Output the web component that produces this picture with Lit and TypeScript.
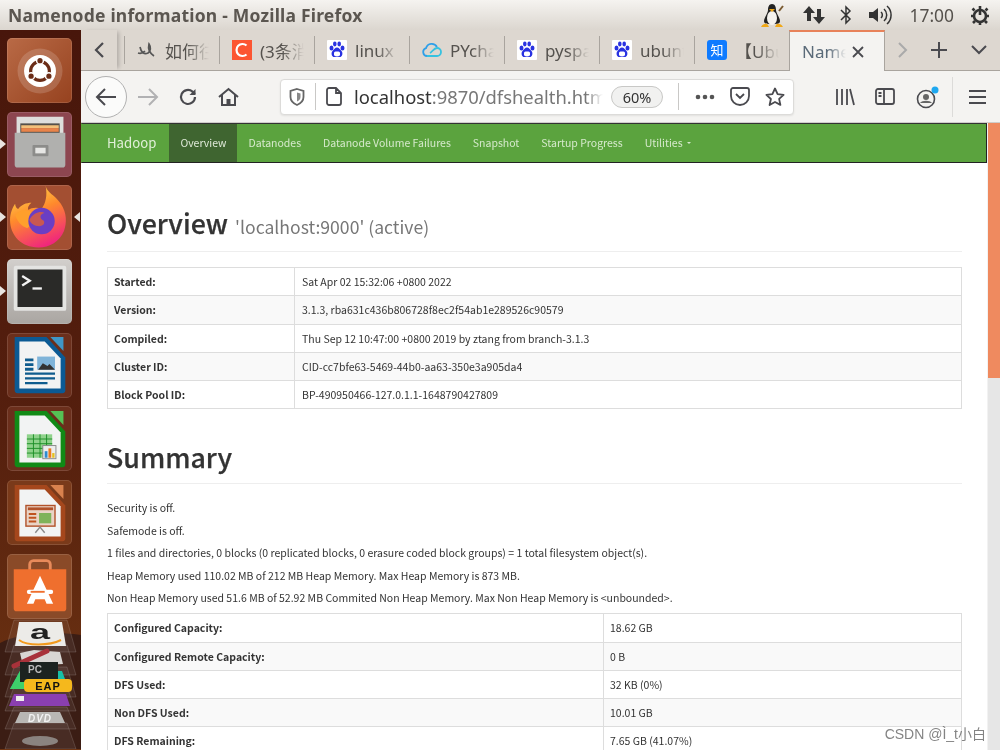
import { LitElement, html, css } from "lit";
import { customElement } from "lit/decorators.js";

const baidu = html`<svg class="fav" viewBox="0 0 20 20"><rect width="20" height="20" rx="1" fill="#fff"/><g fill="#2932e1"><ellipse cx="4.500" cy="8" rx="2" ry="2.600"/><ellipse cx="7.800" cy="4" rx="1.800" ry="2.400"/><ellipse cx="12.200" cy="4" rx="1.800" ry="2.400"/><ellipse cx="15.500" cy="8" rx="2" ry="2.600"/><path d="M10 7.500c2 0 3 2 4.500 3.400 1.500 1.400 1.400 6.100-2 6.100-1 0-1.600-.4-2.500-.4s-1.600.4-2.500.4c-3.400 0-3.500-4.700-2-6.100C7 9.500 8 7.500 10 7.500z"/></g><rect x="7" y="11.500" width="6" height="4.500" rx="1.500" fill="#fff"/></svg>`;

const tabs = [
  { icon: html`<svg class="fav" viewBox="0 0 20 20" fill="none" stroke="#555" stroke-width="1.700"><path d="M3 7c1 5 4 8 8 6 3-2 3-6 1-9-1 4-1 8 5 12"/><path d="M1 13c3 1 5 0 7-2"/></svg>`, t: "如何往" },
  { icon: html`<svg class="fav" viewBox="0 0 20 20"><rect width="20" height="20" fill="#fc5531"/><path d="M14.500 5.500A6 6 0 1 0 14.500 14.500" fill="none" stroke="#fff" stroke-width="2.200"/></svg>`, t: "(3条消息)" },
  { icon: baidu, t: "linux" },
  { icon: html`<svg class="fav" viewBox="0 0 20 20" fill="none" stroke-width="1.800"><path d="M5 16a4 4 0 0 1-1-7.800A6 6 0 0 1 15 7" stroke="#2f9fe8"/><path d="M5 16h10a4 4 0 0 0 0-8c-3 0-5 4-7 5" stroke="#35c2e0"/></svg>`, t: "PYcharm" },
  { icon: baidu, t: "pyspark" },
  { icon: baidu, t: "ubuntu" },
  { icon: html`<svg class="fav" viewBox="0 0 20 20"><rect width="20" height="20" rx="3" fill="#0f7bff"/><text x="10" y="15" text-anchor="middle" font-size="13" font-family="Noto Sans CJK SC" fill="#fff">知</text></svg>`, t: "【Ubuntu" },
];

const navItems = ["Overview", "Datanodes", "Datanode Volume Failures", "Snapshot", "Startup Progress"];

const overview: [string, string][] = [
  ["Started:", "Sat Apr 02 15:32:06 +0800 2022"],
  ["Version:", "3.1.3, rba631c436b806728f8ec2f54ab1e289526c90579"],
  ["Compiled:", "Thu Sep 12 10:47:00 +0800 2019 by ztang from branch-3.1.3"],
  ["Cluster ID:", "CID-cc7bfe63-5469-44b0-aa63-350e3a905da4"],
  ["Block Pool ID:", "BP-490950466-127.0.1.1-1648790427809"],
];
const summary: [string, string][] = [
  ["Configured Capacity:", "18.62 GB"],
  ["Configured Remote Capacity:", "0 B"],
  ["DFS Used:", "32 KB (0%)"],
  ["Non DFS Used:", "10.01 GB"],
  ["DFS Remaining:", "7.65 GB (41.07%)"],
];
const lines = [
  "Security is off.",
  "Safemode is off.",
  "1 files and directories, 0 blocks (0 replicated blocks, 0 erasure coded block groups) = 1 total filesystem object(s).",
  "Heap Memory used 110.02 MB of 212 MB Heap Memory. Max Heap Memory is 873 MB.",
  "Non Heap Memory used 51.6 MB of 52.92 MB Commited Non Heap Memory. Max Non Heap Memory is <unbounded>.",
];

const launcher = [
  { cls: "dash", svg: html`<svg viewBox="0 0 64 64"><circle cx="32" cy="32" r="24" fill="#fff" opacity=".16"/><circle cx="32" cy="32" r="17" fill="#fff"/><circle cx="32" cy="32" r="10" fill="none" stroke="#6b2c16" stroke-width="3.400"/><g fill="#6b2c16" stroke="#fff" stroke-width="1.600"><circle cx="32" cy="21" r="3.600"/><circle cx="22.500" cy="37.500" r="3.600"/><circle cx="41.500" cy="37.500" r="3.600"/></g></svg>` },
  { cls: "files", pip: true, svg: html`<svg viewBox="0 0 64 64"><path d="M7 3h50v18H7z" fill="#dededc"/><rect x="11" y="10" width="42" height="11" fill="#55504a"/><rect x="12" y="12" width="40" height="3" fill="#f3c07a"/><rect x="12" y="15" width="40" height="4" fill="#e8834a"/><path d="M5 20h54v34a3 3 0 0 1-3 3H8a3 3 0 0 1-3-3z" fill="#b0b0ae"/><rect x="24" y="33" width="17" height="12" rx="1" fill="#8c8c8a"/><rect x="27" y="36" width="11" height="6" fill="#e6e6e4"/></svg>` },
  { cls: "fox", pip: true, pipR: true, svg: html`<svg viewBox="0 0 64 64" class="big"><defs><linearGradient id="fx" x1="0.200" y1="0" x2="0.600" y2="1"><stop offset="0" stop-color="#ffe14d"/><stop offset="0.450" stop-color="#ff8a2c"/><stop offset="1" stop-color="#f0247e"/></linearGradient></defs><path d="M38 1c1 7 9 9 15 18 6 9 6 19 3 27-4 10-14 16-25 16C14 62 3 50 3 35c0-7 3-13 5-16 0 3 2 5 3 5 3-4 8-6 13-6-3 3-4 5-3 7 3-2 8-3 13-1 4-5 6-13 4-23z" fill="url(#fx)"/><path d="M8 30c5-6 12-6 17-2-3 3-1 7 3 8l-8 7c-6-2-10-7-12-13z" fill="#ff9f2c"/><circle cx="34" cy="36" r="13" fill="#6a3ec4"/><path d="M22 35c4-8 12-9 15-7-5 1-5 5-2 7 3 1 2 6-3 6-5 0-8-2-10-6z" fill="#e9622c" opacity=".75"/></svg>` },
  { cls: "term", pip: true, svg: html`<svg viewBox="0 0 64 64"><rect x="4" y="4" width="56" height="48" rx="2" fill="#e4e4e2"/><rect x="8" y="8" width="48" height="40" fill="#2a2a28"/><path d="M13 15l8 5-8 5" fill="none" stroke="#f2f2f2" stroke-width="2.500"/><rect x="24" y="27" width="10" height="2.500" fill="#f2f2f2"/></svg>` },
  { cls: "doc", svg: html`<svg viewBox="0 0 64 64"><path d="M5 2h34l20 22v35a3 3 0 0 1-3 3H8a3 3 0 0 1-3-3z" fill="#0b5a94"/><path d="M10 7h27l17 18v32H10z" fill="#f2f3f3"/><path d="M43 2h14v15z" fill="#3f97c7"/><path d="M16 25h9v3h-9zm0 5h9v3h-9zm0 5h9v3h-9zM16 40h32v2.500H16zm0 5h32v2.500H16zm0 5h24v2.500H16z" fill="#0f5c8e"/><rect x="29" y="23" width="19" height="14" fill="#7fb4d9"/><path d="M30 37l5-7 5 3 2-2 6 6z" fill="#333"/></svg>` },
  { cls: "calc", svg: html`<svg viewBox="0 0 64 64"><path d="M5 2h34l20 22v35a3 3 0 0 1-3 3H8a3 3 0 0 1-3-3z" fill="#118a16"/><path d="M10 7h27l17 18v32H10z" fill="#f2f3f3"/><path d="M43 2h14v15z" fill="#55c255"/><rect x="18" y="27" width="27" height="25" fill="#8fd28b"/><path d="M18 32h27M18 37h27M18 42h27M18 47h27M25 27v25M32 27v25M39 27v25" stroke="#1c8e26" stroke-width="1"/><rect x="35" y="39" width="14" height="14" fill="#eee" stroke="#888"/><rect x="37" y="45" width="3" height="7" fill="#2f8bd1"/><rect x="41" y="42" width="3" height="10" fill="#ea7a22"/><rect x="45" y="47" width="2.500" height="5" fill="#e6c11e"/></svg>` },
  { cls: "press", svg: html`<svg viewBox="0 0 64 64"><path d="M5 2h34l20 22v35a3 3 0 0 1-3 3H8a3 3 0 0 1-3-3z" fill="#a5471c"/><path d="M10 7h27l17 18v32H10z" fill="#f2f3f3"/><path d="M43 2h14v15z" fill="#d9824e"/><rect x="17" y="24" width="31" height="22" fill="#e9d4c6" stroke="#b2522a" stroke-width="1.500"/><rect x="19" y="26" width="27" height="3" fill="#b2522a"/><path d="M20 32h8v2h-8zm0 4h8v2h-8zm0 4h8v2h-8z" fill="#c0531f"/><rect x="31" y="32" width="13" height="11" fill="#7fb35a"/><path d="M27 53l5-6 5 6" fill="none" stroke="#888" stroke-width="1.500"/></svg>` },
  { cls: "store", svg: html`<svg viewBox="0 0 64 64"><path d="M21 18V9a4 4 0 0 1 4-4h14a4 4 0 0 1 4 4v9" fill="none" stroke="#e88a5a" stroke-width="3"/><path d="M4 14h56v42a3 3 0 0 1-3 3H7a3 3 0 0 1-3-3z" fill="#ef6f2e"/><path d="M32 21l-14 30h7l2-5h10l2 5h7z" fill="#fff"/><rect x="18" y="36" width="28" height="4.500" rx="2" fill="#fff"/><rect x="22" y="37.200" width="15" height="2" fill="#ef6f2e"/></svg>` },
];

const tray = (y: number, h: number) =>
  `M14 ${y}H67L76 ${y + h}H5Z`;

@customElement("app-root")
export class AppRoot extends LitElement {
  static styles = css`
    :host { display: block; width: 1000px; height: 750px; overflow: hidden; font-family: "Noto Sans", sans-serif; background: #fff; position: relative; filter: blur(0.35px); }
    svg { display: block; }
    .titlebar { height: 30px; display: flex; align-items: center; padding: 0 10px 0 8px; background: linear-gradient(#f5f3f0, #dbd6cf); color: #5b5650; }
    .title { font: 700 17.500px/30px "Noto Sans", sans-serif; flex: 1; letter-spacing: 0.200px; white-space: nowrap; }
    .tray { display: flex; align-items: center; }
    .tray svg { flex: none; }
    .clock { font: 400 17.400px "Noto Sans", sans-serif; color: #55514c; margin: 0 16px 0 0; }
    .main { display: flex; height: 720px; }
    .launcher { width: 81px; flex: none; box-sizing: border-box; background: linear-gradient(#48160b 0, #551f0e 55%, #6f3512 100%); padding: 8px 0 0 7px; display: flex; flex-direction: column; gap: 8.700px; overflow: hidden; }
    .tile { width: 65px; height: 65px; border-radius: 5px; position: relative; display: flex; align-items: center; justify-content: center; flex: none; box-shadow: inset 0 0 0 1px rgba(255,255,255,.12); }
    .tile svg { width: 60px; height: 60px; }
    .tile svg.big { width: 66px; height: 66px; margin-top: -2px; }
    .tile.dash { background: linear-gradient(135deg, #b96a46, #96421f); }
    .tile.files { background: #8d4650; }
    .tile.fox { background: #a34f32; }
    .tile.term { background: linear-gradient(#d2cfcc, #aaa6a2); }
    .tile.doc, .tile.calc { background: #6b2f1c; }
    .tile.press { background: #7a3a1a; }
    .tile.store { background: #8a4a28; }
    .pip { position: absolute; left: -7px; top: 27px; width: 0; height: 0; border: 5px solid transparent; border-left: 6px solid #e8e4e0; border-right: 0; }
    .pip.r { left: auto; right: -8px; border-right: 6px solid #e8e4e0; border-left: 0; }
    .stack { flex: none; margin: -8.700px 0 0 -7px; width: 81px; height: 130px; }
    .browser { flex: 1; min-width: 0; display: flex; flex-direction: column; }
    .tabbar { height: 41px; flex: none; display: flex; background: #ddd7d0; box-sizing: border-box; border-bottom: 1px solid #a9a49e; }
    .scrollbtn { width: 36px; flex: none; display: flex; align-items: center; justify-content: center; box-shadow: 4px 0 4px -2px rgba(0,0,0,.2); }
    .tab { width: 94px; flex: none; display: flex; align-items: center; box-sizing: border-box; padding-left: 12px; gap: 8px; overflow: hidden; white-space: nowrap; font: 400 17px "Noto Sans", "Noto Sans CJK SC", sans-serif; color: #55524e; }
    .tabsep { width: 1px; margin: 6px 0; background: #a9a49e; flex: none; }
    .tab .label { -webkit-mask-image: linear-gradient(90deg, #000 50%, transparent); mask-image: linear-gradient(90deg, #000 50%, transparent); width: 44px; overflow: hidden; flex: none; }
    .fav { width: 20px; height: 20px; flex: none; }
    .active { width: 96px; flex: none; margin-bottom: -1px; background: #f4f3f1; border-top: 2px solid #e8825a; border-left: 1px solid #a9a49e; border-right: 1px solid #a9a49e; box-sizing: border-box; display: flex; align-items: center; padding-left: 12px; font: 400 17px "Noto Sans", sans-serif; color: #5a6a78; gap: 5px; }
    .active .label { width: 44px; overflow: hidden; -webkit-mask-image: linear-gradient(90deg, #000 60%, transparent); mask-image: linear-gradient(90deg, #000 60%, transparent); }
    .tabtools { flex: 1; display: flex; align-items: center; }
    .toolbar { height: 52px; flex: none; box-sizing: border-box; background: #f4f3f1; border-bottom: 1px solid #cfcdca; display: flex; align-items: center; padding-left: 4px; }
    .back { width: 42px; height: 42px; border-radius: 50%; background: #fbfbfa; border: 1px solid #b1b1b1; box-sizing: border-box; display: flex; align-items: center; justify-content: center; flex: none; }
    .tbtn { display: flex; justify-content: center; flex: none; }
    .urlbar { margin-left: 31px; width: 514px; height: 36px; flex: none; box-sizing: border-box; background: #fff; border: 1px solid #dcdbd9; border-radius: 4px; display: flex; align-items: center; box-shadow: 0 1px 2px rgba(0,0,0,.08); }
    .vsep { width: 1px; height: 27px; background: #c9c8c6; flex: none; }
    .url { font: 400 18.400px "Noto Sans", sans-serif; color: #777; width: 249px; overflow: hidden; white-space: nowrap; flex: none; margin-left: 12px; -webkit-mask-image: linear-gradient(90deg, #000 93%, transparent); mask-image: linear-gradient(90deg, #000 93%, transparent); }
    .url b { font-weight: 400; color: #333; }
    .zoom { width: 52px; height: 22px; box-sizing: border-box; border: 1px solid #c8c8c6; border-radius: 11px; background: #f1f1f0; font: 400 14.500px/20px "Noto Sans", sans-serif; color: #333; text-align: center; flex: none; margin-left: 8px; }
    .viewport { flex: 1; min-height: 0; display: flex; overflow: hidden; }
    .page { width: 906px; flex: none; box-sizing: border-box; overflow: hidden; }
    .navbar { height: 40px; box-sizing: border-box; background: #5ba33e; border-top: 1px solid #333; border-bottom: 1px solid #222; border-right: 1px solid #222; border-left: 1px solid #5ba33e; display: flex; align-items: stretch; font: 400 10.500px/38px "Noto Sans CJK SC", sans-serif; color: #d6e9cc; }
    .brand { font-size: 13.200px; padding: 0 13px 0 25px; color: #e2f0da; }
    .navitem { padding: 0 11px; white-space: nowrap; display: flex; align-items: center; gap: 4px; }
    .navitem.on { background: #3f6530; color: #dfe9d8; }
    .caret { width: 0; height: 0; border: 2px solid transparent; border-top: 2px solid #d6e9cc; border-bottom: 0; }
    .content { padding: 0 25px 0 26px; color: #333; font-family: "Noto Sans CJK SC", sans-serif; }
    h1 { margin: 0; font: 500 26.800px/32px "Noto Sans CJK SC", sans-serif; color: #333; -webkit-text-stroke: 0.25px #333; border-bottom: 1px solid #eee; padding: 44px 0 12px; }
    h1 small { font-size: 17.600px; line-height: 1; font-weight: 400; color: #777; margin-left: 1px; -webkit-text-stroke: 0; }
    h1.second { padding: 0 0 10px; margin-top: 32px; }
    table { width: 100%; border-collapse: collapse; table-layout: fixed; font: 400 10.500px/14px "Noto Sans CJK SC", sans-serif; margin-top: 15px; border: 1px solid #ddd; }
    td, th { border: 1px solid #ddd; padding: 7px 6px 6.250px; text-align: left; height: 14px; color: #333; }
    .first td { padding-left: 7px; }
    th { font-weight: 700; }
    tr:nth-child(odd) { background: #f9f9f9; }
    .lines { margin-top: 17px; font: 400 10.500px/14px "Noto Sans CJK SC", sans-serif; color: #333; display: flex; flex-direction: column; gap: 8.500px; }
    .lines + table { margin-top: 8px; }
    .scroll { width: 13px; flex: none; background: #e6e6e6; position: relative; border-left: 1px solid #f2f2f2; box-sizing: border-box; }
    .thumb { position: absolute; left: 0; right: 0; top: 0; height: 255px; background: #ef8a5f; }
    .wm { position: absolute; right: 14px; top: 725px; font: 400 14px/18px "Liberation Sans", "Noto Sans CJK SC", sans-serif; color: rgba(90,90,90,.75); }
  `;

  private kv(rows: [string, string][], w: string, cls = "") {
    return html`<table class=${cls}><colgroup><col style="width:${w}"/><col/></colgroup>${rows.map(([k, v]) => html`<tr><th>${k}</th><td>${v}</td></tr>`)}</table>`;
  }

  render() {
    return html`
      <div class="titlebar">
        <div class="title">Namenode information - Mozilla Firefox</div>
        <div class="tray">
          <svg width="26" height="26" viewBox="0 0 26 26" style="margin-right:17px"><path d="M13 2c3 0 4 3 4 6s4 8 4 11-3 3-8 3-8 0-8-3 4-8 4-11 1-6 4-6z" fill="#222"/><ellipse cx="13" cy="16" rx="5" ry="7" fill="#f4f2ee"/><path d="M10 7h6l-3 3z" fill="#f0a818"/><path d="M2 25c2-4 6-4 7-2l1 2zM24 25c-2-4-6-4-7-2l-1 2z" fill="#f0a818"/><path d="M20 9l4-5" stroke="#7a5a30" stroke-width="2"/></svg>
          <svg width="24" height="22" viewBox="0 0 24 22" style="margin-right:14px" fill="#333"><path d="M7 2l6 7H9v8H5V9H1zM17 20l6-7h-4V5h-4v8h-4z"/></svg>
          <svg width="12" height="20" viewBox="0 0 12 20" style="margin-right:16px" fill="none" stroke="#333" stroke-width="1.500"><path d="M1 5l9 9-4 4V2l4 4-9 9"/></svg>
          <svg width="25" height="20" viewBox="0 0 25 20" style="margin-right:17px" fill="none" stroke="#333" stroke-width="1.500"><path d="M1 7h4l5-4v14l-5-4H1z" fill="#333" stroke="none"/><path d="M13 7a4 4 0 0 1 0 6M16 4a8 8 0 0 1 0 12M19 1a12 12 0 0 1 0 18"/></svg>
          <div class="clock">17:00</div>
          <svg width="20" height="20" viewBox="0 0 20 20" fill="none" stroke="#333" stroke-width="2.600"><circle cx="10" cy="11" r="6"/><path d="M10 1v9M2.500 3.500l2 2M17.500 3.500l-2 2M1 11h2M17 11h2M3 18l2-2M17 18l-2-2M10 17v3"/></svg>
        </div>
      </div>
      <div class="main">
        <div class="launcher">
          ${launcher.map((l: any) => html`<div class="tile ${l.cls}">${l.pip ? html`<i class="pip"></i>` : ""}${l.pipR ? html`<i class="pip r"></i>` : ""}${l.svg}</div>`)}
          <svg class="stack" viewBox="0 0 81 130">
            <path d="M0 24c20-10 50-12 81-8v114H0z" fill="#3b1d14"/>
            <g fill="rgba(255,255,255,.07)" stroke="rgba(255,255,255,.14)">
              <path d="${tray(1, 32)}"/><path d="${tray(26, 30)}"/><path d="${tray(48, 30)}"/><path d="${tray(68, 24)}"/><path d="${tray(88, 22)}"/><path d="${tray(104, 26)}"/>
            </g>
            <path d="M19 3h43l4 24H15z" fill="#ecebe8"/>
            <text transform="translate(40 20) scale(1.500 .85)" text-anchor="middle" font-family="Liberation Sans" font-weight="700" font-size="24" fill="#222">a</text>
            <path d="M19 21c8 6 30 6 42 0" fill="none" stroke="#f29a1e" stroke-width="2"/>
            <path d="M20 34l14-3 26 2 3 12-40 2z" fill="#d8d6d3"/>
            <path d="M14 47l33-15" stroke="#a8323a" stroke-width="5" stroke-linecap="round"/>
            <path d="M10 70l10-18 42 0 6 16z" fill="#17c0a8"/>
            <path d="M10 70l10-18h8v18z" fill="#3ed06a"/>
            <rect x="20" y="43" width="38" height="20" fill="#1c2320"/>
            <text x="28" y="54" font-family="Liberation Sans" font-weight="700" font-size="10" fill="#bbb">PC</text>
            <path d="M9 87l5-12h52l4 12z" fill="#8a3fb0"/>
            <rect x="16" y="77" width="8" height="5" fill="#eee"/>
            <rect x="24" y="60" width="48" height="13" rx="4" fill="#f5b81c"/>
            <text x="48" y="70.500" text-anchor="middle" font-family="Liberation Sans" font-weight="700" font-size="11" letter-spacing="1" fill="#111">EAP</text>
            <path d="M20 93h40l5 11H15z" fill="#b9b7b4"/>
            <text x="40" y="103" text-anchor="middle" font-family="Liberation Sans" font-weight="700" font-style="italic" font-size="10" letter-spacing="1" fill="#f2f2f2">DVD</text>
            <ellipse cx="40" cy="122" rx="18" ry="5" fill="#8a837f"/>
          </svg>
        </div>
        <div class="browser">
          <div class="tabbar">
            <div class="scrollbtn"><svg width="12" height="18" viewBox="0 0 12 18" fill="none" stroke="#4a4a4f" stroke-width="2.200"><path d="M10 2L3 9l7 7"/></svg></div>
            <div class="tabsep" style="margin-left:7px"></div>
            ${tabs.map((t, i) => html`<div class="tab"><span>${t.icon}</span><span class="label">${t.t}</span></div>${i < tabs.length - 1 ? html`<div class="tabsep"></div>` : ""}`)}
            <div class="active"><span class="label">Name</span><svg width="14" height="14" viewBox="0 0 14 14" stroke="#4a4a4f" stroke-width="1.800"><path d="M2 2l10 10M12 2L2 12"/></svg></div>
            <div class="tabtools">
              <svg width="12" height="18" viewBox="0 0 12 18" fill="none" stroke="#aaa" stroke-width="2" style="margin-left:12px"><path d="M2 2l7 7-7 7"/></svg>
              <svg width="18" height="18" viewBox="0 0 18 18" stroke="#4a4a4f" stroke-width="2" style="margin-left:21px"><path d="M9 1v16M1 9h16"/></svg>
              <svg width="16" height="10" viewBox="0 0 16 10" fill="none" stroke="#4a4a4f" stroke-width="2" style="margin-left:23px"><path d="M1 1l7 7 7-7"/></svg>
            </div>
          </div>
          <div class="toolbar">
            <div class="back"><svg width="22" height="20" viewBox="0 0 22 20" fill="none" stroke="#4a4a4f" stroke-width="2"><path d="M10 2L2 10l8 8M2 10h19"/></svg></div>
            <div class="tbtn" style="width:42px"><svg width="22" height="20" viewBox="0 0 22 20" fill="none" stroke="#b1b1b3" stroke-width="2"><path d="M12 2l8 8-8 8M20 10H1"/></svg></div>
            <div class="tbtn" style="width:38px"><svg width="20" height="20" viewBox="0 0 20 20" fill="none" stroke="#4a4a4f" stroke-width="2.200"><path d="M17 10a7 7 0 1 1-2.500-5.400L17 7"/><path d="M17.500 2v6h-6" fill="#4a4a4f" stroke="none"/></svg></div>
            <div class="tbtn" style="width:42px"><svg width="21" height="20" viewBox="0 0 21 20" fill="none" stroke="#4a4a4f" stroke-width="2"><path d="M1 10l9.500-8 9.500 8M4 8v10h13V8"/><rect x="8.500" y="12" width="4" height="6" fill="#4a4a4f" stroke="none"/></svg></div>
            <div class="urlbar">
              <svg width="16" height="18" viewBox="0 0 16 18" style="margin:0 10px 0 8px" fill="none" stroke="#666" stroke-width="1.800"><path d="M8 1l6.500 2v6c0 4-3 6.500-6.500 8C4.500 15.500 1.500 13 1.500 9V3z"/><path d="M8 4.500l3.500 1v3.500c0 2-1.500 3.500-3.500 4.500z" fill="#888" stroke="none"/></svg>
              <div class="vsep"></div>
              <svg width="16" height="19" viewBox="0 0 16 19" style="margin-left:10px" fill="none" stroke="#4a4a4f" stroke-width="1.800"><path d="M3 1h7l5 5v10a2 2 0 0 1-2 2H3a2 2 0 0 1-2-2V3a2 2 0 0 1 2-2zM10 1v5h5"/></svg>
              <div class="url"><b>localhost</b>:9870/dfshealth.html</div>
              <div class="zoom">60%</div>
              <div class="vsep" style="margin-left:15px"></div>
              <svg width="20" height="6" viewBox="0 0 20 6" fill="#555" style="margin-left:16px"><circle cx="3" cy="3" r="2.300"/><circle cx="10" cy="3" r="2.300"/><circle cx="17" cy="3" r="2.300"/></svg>
              <svg width="20" height="19" viewBox="0 0 20 19" fill="none" stroke="#4a4a4f" stroke-width="1.800" style="margin-left:15px"><path d="M3 1h14a2 2 0 0 1 2 2v6a9 9 0 0 1-18 0V3a2 2 0 0 1 2-2zM6 7l4 4 4-4"/></svg>
              <svg width="20" height="20" viewBox="0 0 20 20" fill="none" stroke="#4a4a4f" stroke-width="1.800" style="margin-left:15px"><path d="M10 1.500l2.600 5.600 6 .7-4.500 4.100 1.300 6L10 15l-5.400 3 1.300-6L1.400 7.800l6-.7z" stroke-linejoin="round"/></svg>
            </div>
            <svg width="20" height="18" viewBox="0 0 20 18" fill="none" stroke="#4a4a4f" stroke-width="1.800" style="margin-left:41px"><path d="M2 1v16M7 1v16M12 1v16M15 1l4 16"/></svg>
            <svg width="20" height="17" viewBox="0 0 20 17" fill="none" stroke="#4a4a4f" stroke-width="1.800" style="margin-left:20px"><rect x="1" y="1" width="18" height="15" rx="2"/><path d="M9 1v15M3.500 5h3M3.500 8h3"/></svg>
            <svg width="24" height="24" viewBox="0 0 24 24" style="margin-left:21px" fill="none" stroke="#4a4a4f" stroke-width="1.600"><circle cx="10" cy="14" r="8.500"/><circle cx="10" cy="12" r="3" fill="#666" stroke="none"/><path d="M4 18c2-3 10-3 12 0" fill="#666" stroke="none"/><circle cx="19" cy="5" r="3.500" fill="#1fa8f0" stroke="none"/></svg>
            <div class="vsep" style="height:40px;margin-left:12px;background:#dcdbd9"></div>
            <svg width="17" height="14" viewBox="0 0 17 14" stroke="#4a4a4f" stroke-width="2" style="margin-left:16px"><path d="M0 1h17M0 7h17M0 13h17"/></svg>
          </div>
          <div class="viewport">
            <div class="page">
              <div class="navbar">
                <div class="brand">Hadoop</div>
                ${navItems.map((n, i) => html`<div class="navitem ${i === 0 ? "on" : ""}">${n}</div>`)}
                <div class="navitem">Utilities <i class="caret"></i></div>
              </div>
              <div class="content">
                <h1>Overview <small>'localhost:9000' (active)</small></h1>
                ${this.kv(overview, "187px", "first")}
                <h1 class="second">Summary</h1>
                <div class="lines">${lines.map((l) => html`<div>${l}</div>`)}</div>
                ${this.kv(summary, "496px")}
              </div>
            </div>
            <div class="scroll"><div class="thumb"></div></div>
          </div>
        </div>
      </div>
      <div class="wm">CSDN @Ì_t小白</div>
    `;
  }
}
